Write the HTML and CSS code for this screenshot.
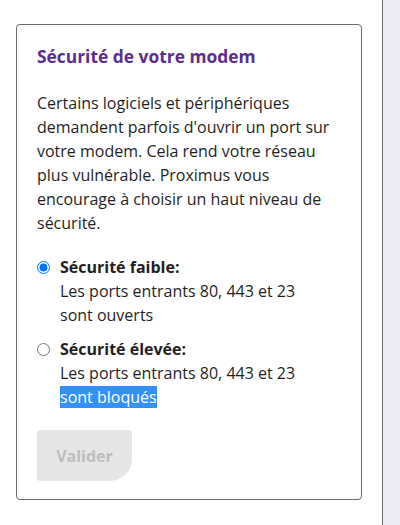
FILE: index.html
```html
<!DOCTYPE html>
<html lang="fr">
<head>
<meta charset="utf-8">
<title>Sécurité de votre modem</title>
<link rel="stylesheet" href="styles.css">
</head>
<body>
<div class="page">
  <main class="main">
    <section class="card">
      <h2 class="title">Sécurité de votre modem</h2>
      <p class="intro">Certains logiciels et périphériques demandent parfois d'ouvrir un port sur votre modem. Cela rend votre réseau plus vulnérable. Proximus vous encourage à choisir un haut niveau de sécurité.</p>
      <label class="option">
        <input class="radio" type="radio" name="sec" checked>
        <span class="option-text"><strong class="option-title">Sécurité faible:</strong><span class="option-desc">Les ports entrants 80, 443 et 23 sont ouverts</span></span>
      </label>
      <label class="option">
        <input class="radio" type="radio" name="sec">
        <span class="option-text"><strong class="option-title">Sécurité élevée:</strong><span class="option-desc">Les ports entrants 80, 443 et 23 <span class="selected">sont bloqués</span></span></span>
      </label>
      <button class="btn" type="button" disabled>Valider</button>
    </section>
  </main>
  <aside class="side"></aside>
</div>
</body>
</html>
```
FILE: styles.css
```css
html, body {
  margin: 0;
  padding: 0;
  background: #ffffff;
}
body {
  font-family: "Open Sans", "Noto Sans", sans-serif;
  color: #1f1f1f;
  font-size: 16px;
  line-height: 24px;
}
.page {
  display: flex;
  height: 525px;
}
.main {
  width: 382px;
  padding: 24px 20px 0 16px;
  box-sizing: border-box;
}
.side {
  flex: 1;
  border-left: 1px solid #6e6e6e;
  background: #ece9f5;
}
.card {
  border: 1px solid #6b6b6b;
  border-radius: 4px;
  padding: 19px 20px 19px 20px;
  height: 476px;
  box-sizing: border-box;
}
.title {
  margin: 0 0 23px;
  font-size: 17.4px;
  line-height: 24px;
  font-weight: 700;
  color: #5c2d91;
}
.intro {
  margin: 0 0 20px;
}
.option {
  display: flex;
  align-items: flex-start;
  gap: 10px;
  margin-bottom: 10px;
}
.radio {
  margin: 6px 0 0 0;
  width: 13px;
  height: 13px;
  flex: none;
}
.option-text {
  display: flex;
  flex-direction: column;
  max-width: 268px;
}
.option-title {
  font-weight: 700;
}
.selected {
  background: #3390ff;
  color: #ffffff;
}
.btn {
  margin-top: 11px;
  width: 95px;
  height: 51px;
  border: none;
  border-radius: 3px 3px 22px 3px;
  background: #e6e6e6;
  color: #bdbdbd;
  font-family: inherit;
  font-size: 16px;
  font-weight: 700;
}
```
